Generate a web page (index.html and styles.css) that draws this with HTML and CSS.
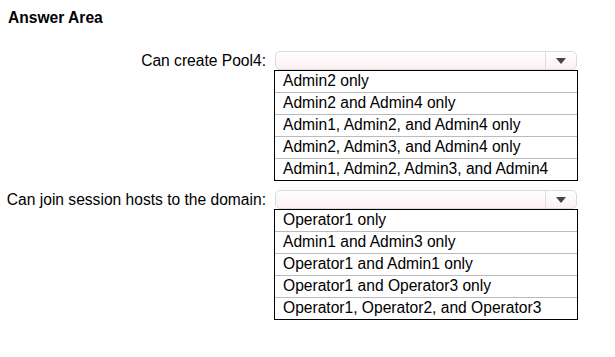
FILE: index.html
```html
<!DOCTYPE html>
<html lang="en">
<head>
  <meta charset="UTF-8">
  <title>Answer Area</title>
  <link rel="stylesheet" href="styles.css">
</head>
<body>
  <h1 class="title">Answer Area</h1>

  <div class="question">
    <div class="label">Can create Pool4:</div>
    <div class="control">
      <div class="dropdown">
        <span class="value"></span>
        <span class="arrow"></span>
      </div>
      <ul class="options">
        <li>Admin2 only</li>
        <li>Admin2 and Admin4 only</li>
        <li>Admin1, Admin2, and Admin4 only</li>
        <li>Admin2, Admin3, and Admin4 only</li>
        <li>Admin1, Admin2, Admin3, and Admin4</li>
      </ul>
    </div>
  </div>

  <div class="question">
    <div class="label">Can join session hosts to the domain:</div>
    <div class="control">
      <div class="dropdown">
        <span class="value"></span>
        <span class="arrow"></span>
      </div>
      <ul class="options">
        <li>Operator1 only</li>
        <li>Admin1 and Admin3 only</li>
        <li>Operator1 and Admin1 only</li>
        <li>Operator1 and Operator3 only</li>
        <li>Operator1, Operator2, and Operator3</li>
      </ul>
    </div>
  </div>
</body>
</html>
```

FILE: styles.css
```css
body {
  font-family: "Liberation Sans", Arial, sans-serif;
  font-size: 15.6px;
  color: #000;
  background-color: #fff;
  margin: 0;
  padding: 9px 8px;
}
.title {
  font-size: 15.6px;
  font-weight: bold;
  line-height: 18px;
  margin: 0 0 24px 0;
}
.question {
  display: flex;
  gap: 8px;
  margin-bottom: 9px;
}
.label {
  flex: 0 0 258px;
  min-width: 0;
  display: flex;
  justify-content: flex-end;
  white-space: nowrap;
  line-height: 19px;
}
.control {
  width: 304px;
}
.dropdown {
  display: flex;
  height: 19px;
  margin: 0 1px;
  border: 1px solid #dcdcdc;
  border-radius: 5px;
  background: linear-gradient(#ffffff, #fcf0f2);
  box-sizing: border-box;
}
.value {
  flex: 1;
}
.arrow {
  width: 30px;
  border-left: 1px solid #dcdcdc;
  display: flex;
  align-items: center;
  justify-content: center;
}
.arrow::after {
  content: "";
  border-left: 5px solid transparent;
  border-right: 5px solid transparent;
  border-top: 6px solid #444;
}
.options {
  list-style: none;
  margin: 0;
  padding: 0;
  border: 1px solid #000;
}
.options li {
  height: 21px;
  line-height: 20px;
  padding-left: 8px;
  border-top: 1px solid #bbb;
}
.options li:first-child {
  border-top: none;
}
```
